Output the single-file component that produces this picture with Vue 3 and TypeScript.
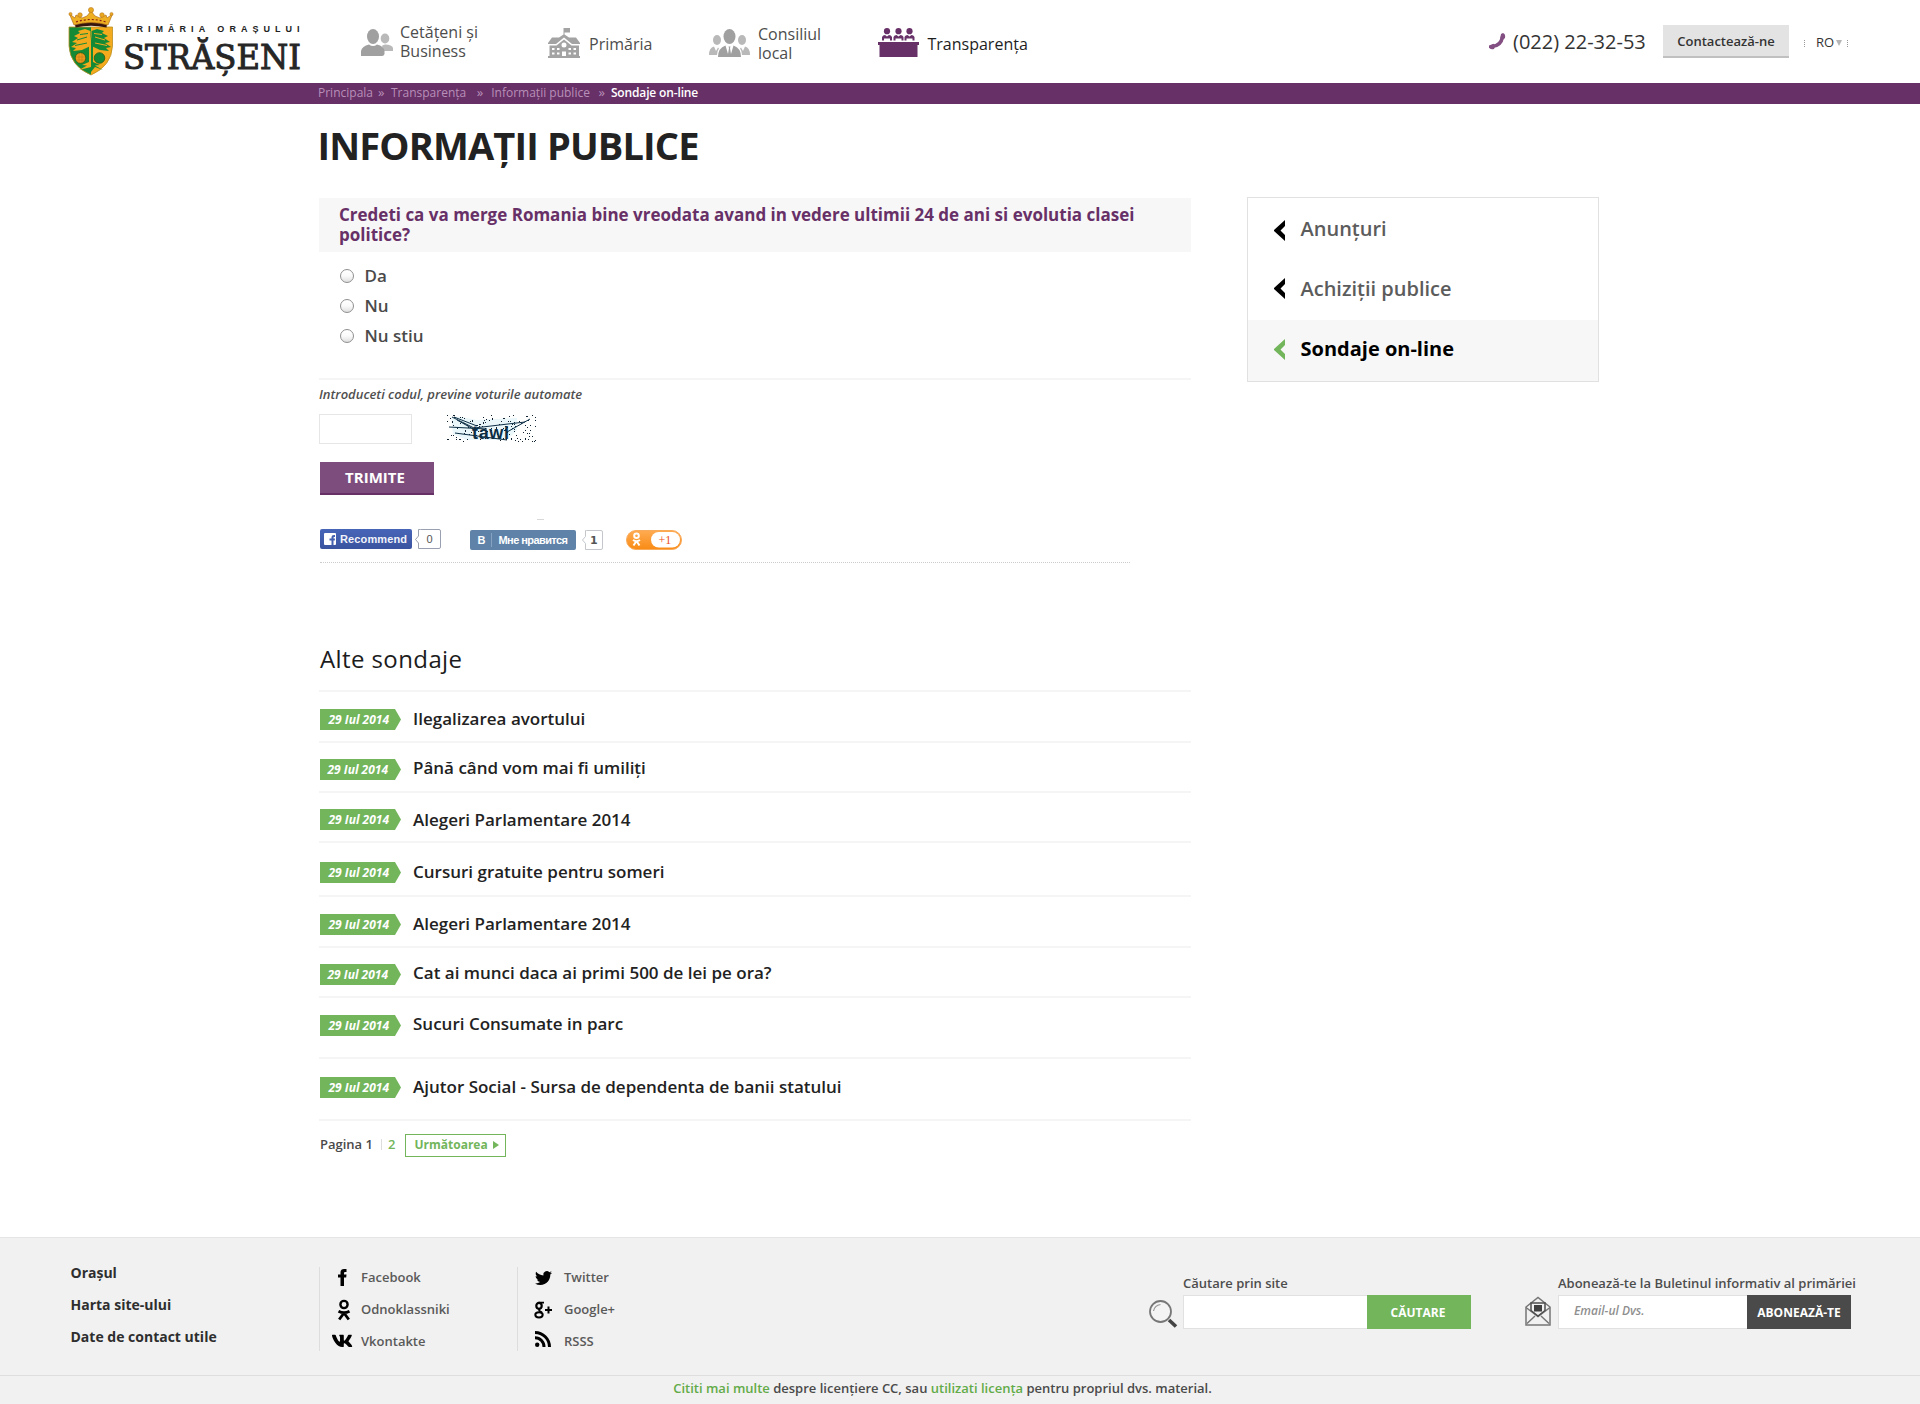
<script setup lang="ts">
interface Poll {
  date: string
  title: string
}

interface Dot {
  x: number
  y: number
}

const answers: string[] = ['Da', 'Nu', 'Nu stiu']

const sections = [
  { label: 'Anunțuri', active: false },
  { label: 'Achiziții publice', active: false },
  { label: 'Sondaje on-line', active: true },
]

const polls: Poll[] = [
  { date: '29 Iul 2014', title: 'Ilegalizarea avortului' },
  { date: '29 Iul 2014', title: 'Până când vom mai fi umiliți' },
  { date: '29 Iul 2014', title: 'Alegeri Parlamentare 2014' },
  { date: '29 Iul 2014', title: 'Cursuri gratuite pentru someri' },
  { date: '29 Iul 2014', title: 'Alegeri Parlamentare 2014' },
  { date: '29 Iul 2014', title: 'Cat ai munci daca ai primi 500 de lei pe ora?' },
  { date: '29 Iul 2014', title: 'Sucuri Consumate in parc' },
  { date: '29 Iul 2014', title: 'Ajutor Social - Sursa de dependenta de banii statului' },
]

// Speckles of the captcha, from a fixed seed so that they stay put.
function speckles(count: number): Dot[] {
  let seed = 7
  const next = () => {
    seed = (seed * 16807) % 2147483647
    return seed / 2147483647
  }
  return Array.from({ length: count }, () => ({ x: Math.floor(next() * 89), y: Math.floor(next() * 27) }))
}
const dots = speckles(140)
</script>

<template>
  <div class="page">
    <header class="top">
      <svg class="logo" width="240" height="83" viewBox="66 0 240 83">
        <path d="M69 27H91V75Q70 66 69 46Z" fill="#148a37" />
        <path d="M91 27H112.500V46Q111.500 66 91 75Z" fill="#f4aa1d" />
        <path d="M90.500 31L85 29L78 31L80 33L74 36L78 38L72 42L77 43L71 47L76 48L73 51L82 50L90.500 46Z" fill="#f4aa1d" />
        <path d="M77 40L87 37M75 45.500L87 43M80 34.500L88 33.500" stroke="#148a37" stroke-width="1" />
        <path d="M91.500 31L97 29L104 31L102 33L108 36L104 38L110 42L105 43L111 47L106 48L109 51L100 50L91.500 46Z" fill="#148a37" />
        <path d="M105 40L95 37M107 45.500L95 43M102 34.500L94 33.500" stroke="#f4aa1d" stroke-width="1" />
        <path d="M91 35V67L79 70L87 65.500L82 65L89 62V46Z" fill="#f4aa1d" />
        <path d="M91 35V72L95 67L103 70L95 65.500L100 65L93 62V46Z" fill="#148a37" />
        <circle cx="80.500" cy="58" r="5.300" fill="#f09a1b" stroke="#2c5a14" stroke-width=".8" />
        <path d="M76 57H85M76 60H85M79 53V63M82 53V63" stroke="#b4761a" stroke-width=".5" />
        <circle cx="99.500" cy="58" r="5.300" fill="#148a37" stroke="#2c5a14" stroke-width=".8" />
        <path d="M69 27H112.500V46Q111.500 66 91 75Q70 66 69 46Z" fill="none" stroke="#b98f22" stroke-width=".8" />
        <path d="M75 24Q91 19 107 24L106.500 27.500Q91 24 75.500 27.500Z" fill="#35150d" />
        <path d="M69.500 14L75 18L76 15L82 18L87 16L91 11L95 16L100 18L106 15L107 18L112.500 14L108 25Q91 20 74 25Z" fill="#eeaf22" stroke="#b3701a" stroke-width=".7" />
        <path d="M76 22Q91 17 106 22" fill="none" stroke="#8c2413" stroke-width="1.200" stroke-dasharray="2 2" />
        <g fill="#e9a820" stroke="#b3701a" stroke-width=".5">
          <circle cx="91" cy="10" r="2.600" /><circle cx="80" cy="15" r="2.300" /><circle cx="102" cy="15" r="2.300" />
          <circle cx="70.500" cy="14" r="1.600" /><circle cx="111.500" cy="14" r="1.600" />
        </g>
        <text x="125.500" y="31.500" class="logo-small" textLength="174">PRIMĂRIA ORAȘULUI</text>
        <text x="123" y="69" class="logo-big" textLength="178" lengthAdjust="spacingAndGlyphs">STRĂȘENI</text>
      </svg>

      <nav class="nav">
        <a class="nav-item citizens">
          <svg width="32" height="27" viewBox="0 0 32 27">
            <g fill="#b9b9b9">
              <ellipse cx="24" cy="9.500" rx="4.300" ry="5" />
              <path d="M23 22H32V19Q31 15.500 24 15.500Q21 16 21 17Z" />
            </g>
            <g fill="#a0a0a0">
              <ellipse cx="12" cy="7.500" rx="6" ry="7.500" />
              <path d="M0 27V22Q1 17 8 15.500Q12 18.500 16 15.500Q23 17 23.500 22V25Q23 27 21 27Z" />
            </g>
          </svg>
          <span>Cetățeni și<br>Business</span>
        </a>
        <a class="nav-item hall">
          <svg width="32" height="30" viewBox="0 0 32 30" fill="#a3a3a3">
            <path d="M15.500 0H22V4.500H16.500V6.500L21 9.500H28L32 15V16H24L16 9.500L8 16H0V15L4 9.500H11L15.500 6.500Z" />
            <path fill-rule="evenodd" d="M1.500 17.500H8.500L16 11.500L23.500 17.500H31V28H32V30H0V28H1.500ZM16 14.500A2.500 2.500 0 1 0 16 19.500A2.500 2.500 0 1 0 16 14.500ZM4 20V22H6.500V20ZM9 20V22H11.500V20ZM20.500 20V22H23V20ZM25.500 20V22H28V20ZM4 24.500V26.500H6.500V24.500ZM9 24.500V26.500H11.500V24.500ZM20.500 24.500V26.500H23V24.500ZM25.500 24.500V26.500H28V24.500ZM14 23.500V28H18V23.500Z" />
          </svg>
          <span>Primăria</span>
        </a>
        <a class="nav-item council">
          <svg width="41" height="28" viewBox="0 0 41 28">
            <g fill="#b9b9b9">
              <ellipse cx="8" cy="11" rx="4" ry="5" /><ellipse cx="33" cy="11" rx="4" ry="5" />
              <path d="M0 26Q0 18.500 5 17.500L7 22L9 18.500L10 19.500Q8 22 8 26Z" />
              <path d="M41 26Q41 18.500 36 17.500L34 22L32 18.500L31 19.500Q33 22 33 26Z" />
            </g>
            <g fill="#a0a0a0">
              <ellipse cx="20.500" cy="7.500" rx="6" ry="7.500" />
              <path d="M9 28Q9 19 16.500 16.500L19 25L20 19L19.500 17.500H21.500L21 19L22 25L24.500 16.500Q32 19 32 28Z" />
            </g>
          </svg>
          <span>Consiliul<br>local</span>
        </a>
        <a class="nav-item open active">
          <svg width="41" height="29" viewBox="0 0 41 29" fill="#673067">
            <g v-for="x in [9, 20.5, 31.5]" :key="x">
              <circle :cx="x" cy="3.2" r="3.1" />
              <path :d="`M${x - 5} 12.500V9Q${x - 4} 7 ${x - 2} 7L${x} 8.500L${x + 2} 7Q${x + 4} 7 ${x + 5} 9V12.500H${x + 3}V10.500H${x - 3}V12.500Z`" />
            </g>
            <path d="M0 14H41V17H39.500V29H1.500V17H0Z" />
          </svg>
          <span>Transparența</span>
        </a>
      </nav>

      <div class="phone">
        <svg width="17" height="17" viewBox="0 0 17 17">
          <path d="M3 13.500Q12 13 13.500 3.500" fill="none" stroke="#834f83" stroke-width="3.600" />
          <path d="M0 12.500L4.500 10.800L6.500 12.500L5 16Q1 17 0 14.500Z" fill="#834f83" />
          <path d="M12 1L14 0Q16.800 1 16 5L14 6.800L11.300 5Z" fill="#834f83" />
        </svg>
        <span>(022) 22-32-53</span>
      </div>
      <button class="contact">Contactează-ne</button>
      <div class="lang"><i></i><span>RO</span><b></b><i></i></div>
    </header>

    <div class="crumbs">
      <a>Principala</a><span class="sep s1">»</span><a>Transparența</a><span class="sep s2">»</span><a>Informații publice</a><span class="sep s3">»</span><strong>Sondaje on-line</strong>
    </div>

    <main class="main">
      <section class="content">
        <h1>INFORMAȚII PUBLICE</h1>
        <h2 class="question">Credeti ca va merge Romania bine vreodata avand in vedere ultimii 24 de ani si evolutia clasei<br>politice?</h2>
        <div class="answers">
          <label v-for="a in answers" :key="a" class="answer"><span class="dot"></span><span class="name">{{ a }}</span></label>
        </div>
        <p class="hint">Introduceti codul, previne voturile automate</p>
        <div class="captcha">
          <input type="text">
          <svg width="90" height="30" viewBox="0 0 90 30">
            <path d="M4 3H14L30 6L70 4V16L60 26H20L6 20Z" fill="#e9f6fa" />
            <rect v-for="(d, i) in dots" :key="i" :x="d.x" :y="d.y + 1" width="1" height="1" fill="#123" />
            <g fill="none" stroke="#0c2e45" stroke-width="1">
              <path d="M5 3L27 14M7 3L30 12M2 13L40 15M8 19L60 26M27 14L78 8M60 18L83 5M10 6L28 16" />
            </g>
            <text x="25" y="24.500" class="code" textLength="37">tawl</text>
          </svg>
        </div>
        <button class="send">TRIMITE</button>

        <div class="share">
          <span class="smudge"></span>
          <svg width="122" height="21" viewBox="0 0 122 21">
            <defs>
              <linearGradient id="fb" x1="0" y1="0" x2="0" y2="1"><stop offset="0" stop-color="#4765b8" /><stop offset="1" stop-color="#3a539f" /></linearGradient>
            </defs>
            <rect x="0" y="0" width="92" height="20" rx="2" fill="url(#fb)" />
            <rect x="4" y="4" width="12" height="12" rx="1" fill="#fff" />
            <path d="M11.500 16V11.500H9.500V9.500H11.500V8Q11.500 6 14 6H15V8H14.200Q13.500 8 13.500 8.800V9.500H15L14.800 11.500H13.500V16Z" fill="#4460b0" />
            <text x="20" y="14" class="fb-text" textLength="67">Recommend</text>
            <path d="M100.500.5H119Q120.500.5 120.500 2V18Q120.500 19.500 119 19.500H98.500V14L95.500 10.500L98.500 7V.5Z" fill="#fff" stroke="#9aa0b0" />
            <text x="106.500" y="14" class="fb-count">0</text>
          </svg>
          <svg class="vk" width="134" height="21" viewBox="0 0 134 21">
            <rect x="0" y="1" width="106" height="20" rx="2" fill="#5e82a8" />
            <text x="7.500" y="15" class="vk-text">В</text>
            <path d="M21.500 4V18" stroke="#86a2c0" />
            <text x="28.500" y="15" class="vk-text" textLength="69.500">Мне нравится</text>
            <path d="M116.500 1.500H131Q132.500 1.500 132.500 3V19Q132.500 20.500 131 20.500H115.500V14.500L112.500 11L115.500 7.500V1.500Z" fill="#fff" stroke="#c3c7cb" />
            <text x="120" y="15" class="vk-count">1</text>
          </svg>
          <svg class="ok" width="57" height="21" viewBox="0 0 57 21">
            <defs>
              <linearGradient id="okb" x1="0" y1="0" x2="0" y2="1"><stop offset="0" stop-color="#ffab52" /><stop offset="1" stop-color="#f98b14" /></linearGradient>
            </defs>
            <rect x=".5" y="1.500" width="55" height="19" rx="9.500" fill="url(#okb)" stroke="#f9ab5c" />
            <rect x="25" y="3" width="29" height="15.500" rx="7.700" fill="#fff" />
            <g fill="none" stroke="#fff" stroke-width="2">
              <circle cx="10.500" cy="6.800" r="2.300" />
              <path d="M7 11Q10.500 13.300 14 11M10.500 12L7.500 16.500M10.500 12L13.500 16.500" />
            </g>
            <text x="32.500" y="15" class="ok-text">+1</text>
          </svg>
        </div>

        <h3>Alte sondaje</h3>
        <div class="polls">
          <article v-for="(p, i) in polls" :key="i" class="poll">
            <time>{{ p.date }}</time>
            <a>{{ p.title }}</a>
          </article>
        </div>
        <div class="pager">
          <span>Pagina 1</span><i></i><a>2</a>
          <button><span>Următoarea</span><svg width="6" height="8" viewBox="0 0 6 8"><path d="M0 0L6 4L0 8Z" fill="#72b55b" /></svg></button>
        </div>
      </section>

      <aside class="side">
        <a v-for="s in sections" :key="s.label" :class="{ active: s.active }">
          <svg width="12" height="21" viewBox="0 0 12 21"><path d="M11 0V6L6.500 10.500L11 15V21L0 11V10Z" fill="currentColor" /></svg>
          <span>{{ s.label }}</span>
        </a>
      </aside>
    </main>

    <footer class="footer">
      <div class="foot-main">
        <div class="links"><a>Orașul</a><a>Harta site-ului</a><a>Date de contact utile</a></div>
        <div class="social first">
          <a><svg width="41" height="32" viewBox="0 0 41 32"><path d="M20.500 25V16.500H18V13.500H20.500V11.500Q20.500 8 24 8H26.500V11H25Q24 11 24 12.200V13.500H26.500L26.200 16.500H24V25Z" /></svg><span>Facebook</span></a>
          <a><svg width="41" height="32" viewBox="0 0 41 32"><g fill="none" stroke="#000" stroke-width="2.400"><circle cx="24" cy="11.500" r="3.600" /><path d="M18.500 18.200Q24 21.200 29.500 18.200M24 20L19.200 26.500M24 20L28.800 26.500" stroke-width="2.800" /></g></svg><span>Odnoklassniki</span></a>
          <a><svg width="41" height="32" viewBox="0 0 41 32"><path transform="translate(11.300 6.200) scale(.0375 .038)" d="M545 117.700c3.700-12.500 0-21.700-17.800-21.700h-58.900c-15 0-21.900 7.900-25.600 16.700 0 0-30 73.100-72.400 120.500-13.700 13.700-20 18.100-27.500 18.100-3.700 0-9.400-4.400-9.400-16.900V117.700c0-15-4.200-21.700-16.600-21.700h-92.600c-9.400 0-15 7-15 13.500 0 14.200 21.200 17.500 23.400 57.500v86.800c0 19-3.400 22.500-10.900 22.500-20 0-68.600-73.400-97.400-157.400-5.800-16.300-11.500-22.900-26.600-22.900H38.800c-16.800 0-20.200 7.900-20.200 16.700 0 15.600 20 93.100 93.100 195.500C160.400 378.100 229 416 291.400 416c37.500 0 42.100-8.400 42.100-22.900 0-66.800-3.400-73.100 15.400-73.100 8.700 0 23.700 4.400 58.700 38.100 40 40 46.600 57.900 69 57.900h58.900c16.800 0 25.300-8.400 20.400-25-11.200-34.900-86.900-106.700-90.300-111.500-8.700-11.200-6.200-16.200 0-26.200.1-.1 72-101.300 79.400-135.600z" /></svg><span>Vkontakte</span></a>
        </div>
        <div class="social second">
          <a><svg width="46" height="32" viewBox="0 0 46 32"><path transform="translate(17 8.500) scale(.71)" d="M23.953 4.570a10 10 0 01-2.825.775 4.958 4.958 0 002.163-2.723c-.951.555-2.005.959-3.127 1.184a4.920 4.920 0 00-8.384 4.482C7.690 8.095 4.067 6.130 1.640 3.162a4.822 4.822 0 00-.666 2.475c0 1.710.870 3.213 2.188 4.096a4.904 4.904 0 01-2.228-.616v.060a4.923 4.923 0 003.946 4.827 4.996 4.996 0 01-2.212.085 4.936 4.936 0 004.604 3.417 9.867 9.867 0 01-6.102 2.105c-.390 0-.779-.023-1.170-.067a13.995 13.995 0 007.557 2.209c9.053 0 13.998-7.496 13.998-13.985 0-.210 0-.420-.015-.630A9.935 9.935 0 0024 4.590z" /></svg><span>Twitter</span></a>
          <a><svg width="46" height="32" viewBox="0 0 46 32"><g fill="none" stroke="#000"><ellipse cx="21" cy="12.800" rx="2.700" ry="3" stroke-width="2.200" /><ellipse cx="21" cy="21.800" rx="3.700" ry="2.600" stroke-width="2" /><path d="M20.500 9.600H26M22 15.500Q20 17 22 18.200L24 19.500" stroke-width="1.700" /><path d="M30.500 13.500V20.500M27 17H34" stroke-width="2" /></g></svg><span>Google+</span></a>
          <a><svg width="46" height="32" viewBox="0 0 46 32"><circle cx="19.200" cy="19.800" r="2.200" /><path d="M17 12.700A9 9 0 0 1 26 22M17 7.500A14.500 14.500 0 0 1 31.500 22" fill="none" stroke="#000" stroke-width="3" /></svg><span>RSSS</span></a>
        </div>

        <svg class="glass" width="28" height="28" viewBox="0 0 28 28">
          <path d="M20 20L27 26.500" stroke="#444" stroke-width="3.600" />
          <circle cx="11.500" cy="11.500" r="10.500" fill="#f4f4f4" stroke="#777" stroke-width="1.800" />
          <path d="M4.500 11Q5.500 5.500 11.500 4.500" fill="none" stroke="#999" stroke-width="1.200" />
        </svg>
        <form class="field search">
          <label>Căutare prin site</label>
          <div><input type="text"><button type="button">CĂUTARE</button></div>
        </form>
        <svg class="mail" width="26" height="30" viewBox="0 0 26 30" fill="none" stroke="#757575" stroke-width="1.500">
          <path d="M1 11L13 1.500L25 11V29H1Z" />
          <path d="M1 11.500L13 20.500L25 11.500M2 27.500L10 20M24 27.500L16 20" />
          <path d="M6 14.500V7H20V14.500L13 20Z" fill="#f1f1f1" stroke="#4d4d4d" />
          <rect x="9" y="9" width="8" height="6.500" fill="#3f3f3f" stroke="none" />
        </svg>
        <form class="field news">
          <label>Abonează-te la Buletinul informativ al primăriei</label>
          <div><input type="text" placeholder="Email-ul Dvs."><button type="button">ABONEAZĂ-TE</button></div>
        </form>
      </div>
      <p class="license"><a>Cititi mai multe</a> despre licențiere CC, sau <a>utilizati licența</a> pentru propriul dvs. material.</p>
    </footer>
  </div>
</template>

<style>
body {
  margin: 0;
  background: #fff;
}
</style>

<style scoped>
.page {
  width: 1920px;
  height: 1404px;
  overflow: hidden;
  font-family: "Open Sans", sans-serif;
  color: #222;
}
button {
  border: 0;
  padding: 0;
  font-family: inherit;
}
svg {
  display: block;
  flex: none;
  overflow: visible;
}

.top {
  display: flex;
  align-items: flex-start;
  height: 83px;
}
.logo { margin-left: 66px; }
.logo-small {
  font: 700 9px "Liberation Sans", sans-serif;
  fill: #222;
}
.logo-big {
  font: 34px "DejaVu Serif", serif;
  fill: #262626;
  stroke: #262626;
  stroke-width: 1;
}
.nav {
  display: flex;
  margin-left: 55px;
}
.nav-item {
  display: flex;
  align-items: flex-start;
  font-size: 16px;
  line-height: 19px;
  color: #4d4d4d;
}
.citizens { width: 187px; gap: 7px; }
.citizens svg { margin-top: 29px; }
.citizens span { margin-top: 23px; }
.hall { width: 161px; gap: 9px; }
.hall svg { margin-top: 28px; }
.hall span { margin-top: 35px; }
.council { width: 169px; gap: 8px; }
.council svg { margin-top: 29px; }
.council span { margin-top: 25px; }
.open { width: 611px; gap: 8.500px; }
.open svg { margin-top: 28px; }
.open span { margin-top: 35px; }
.nav-item.active { color: #1e1e1e; }
.phone {
  display: flex;
  gap: 7px;
  width: 174px;
  font-size: 20px;
  line-height: 24px;
  color: #333;
  white-space: nowrap;
}
.phone svg { margin-top: 33px; }
.phone span { margin-top: 30px; }
.contact {
  width: 126px;
  height: 33px;
  margin-top: 25px;
  border-bottom: 2px solid #c0c0c0;
  background: #e3e3e3;
  font-size: 13px;
  font-weight: 600;
  color: #333;
}
.lang {
  display: flex;
  margin: 40px 0 0 15px;
  font-size: 13px;
  line-height: 16px;
  color: #333;
}
.lang i {
  height: 7px;
  border-left: 1px dotted #999;
}
.lang span { margin: -6px 2px 0 11px; }
.lang b {
  margin-right: 5px;
  height: 0;
  border: 3.500px solid transparent;
  border-top: 6px solid #b5b5b5;
  border-bottom: 0;
}

.crumbs {
  display: flex;
  height: 21px;
  padding-left: 318px;
  background: #673067;
  font-size: 12px;
  line-height: 19px;
  color: #b88fb8;
}
.crumbs strong {
  font-weight: 600;
  letter-spacing: -.15px;
  color: #fff;
}
.sep {
  box-sizing: border-box;
  font-size: 13px;
}
.s1 { width: 18px; padding-left: 5px; }
.s2 { width: 25px; padding-left: 10.500px; }
.s3 { width: 21px; padding-left: 8.500px; }

.main {
  display: flex;
  align-items: flex-start;
  height: 1133px;
}
.content {
  width: 872px;
  margin-left: 319px;
  padding-top: 21px;
}
h1 {
  margin: 0 0 33px -1.500px;
  font-size: 38px;
  font-weight: 700;
  line-height: 40px;
  letter-spacing: -.85px;
  color: #222;
}
.question {
  box-sizing: border-box;
  height: 54px;
  margin: 0;
  padding: 7px 0 0 20px;
  background: #f7f7f7;
  font-size: 17px;
  font-weight: 700;
  line-height: 20px;
  color: #673067;
}
.answers {
  padding: 9px 0 27px 21px;
  border-bottom: 2px solid #f5f5f5;
}
.answer {
  display: flex;
  align-items: center;
  gap: 10.500px;
  height: 30px;
  font-size: 17px;
  font-weight: 600;
  color: #4a4a4a;
}
.name { margin-bottom: 1px; }
.dot {
  box-sizing: border-box;
  width: 14px;
  height: 14px;
  border: 1px solid #8f8f8f;
  border-radius: 50%;
  background: linear-gradient(#fff, #fafafa 50%, #dedede);
}
.hint {
  margin: 4px 0 10px;
  font-size: 13px;
  font-style: italic;
  font-weight: 600;
  line-height: 20px;
  color: #505050;
}
.captcha {
  display: flex;
  gap: 35px;
}
.captcha input {
  box-sizing: border-box;
  width: 93px;
  height: 30px;
  border: 1px solid #e6e6e6;
  background: #fff;
}
.code {
  font: 700 18px "Liberation Sans", sans-serif;
  fill: #0c2e45;
}
.send {
  display: block;
  width: 114px;
  height: 33px;
  margin: 18px 0 0 1px;
  padding: 0 4px 1px 0;
  border-bottom: 2px solid #673067;
  background: #7d4d7d;
  font-size: 15px;
  font-weight: 700;
  color: #fff;
}
.share {
  position: relative;
  display: flex;
  width: 810px;
  height: 33px;
  margin: 34px 0 0 1px;
  border-bottom: 1px dotted #ccc;
}
.smudge {
  position: absolute;
  left: 217px;
  top: -10px;
  width: 7px;
  height: 1px;
  background: #d8d8d8;
}
.vk { margin-left: 28px; }
.ok { margin-left: 22px; }
.fb-text { font: 700 11px "Liberation Sans", sans-serif; fill: #f1f3fa; }
.fb-count { font: 11px "Liberation Sans", sans-serif; fill: #555; }
.vk-text { font: 700 11px "Liberation Sans", sans-serif; fill: #fff; }
.vk-count { font: 700 11px "DejaVu Sans", sans-serif; fill: #555; }
.ok-text { font: 12px "Liberation Serif", serif; fill: #ee4d1b; }

h3 {
  margin: 80px 0 15px 1px;
  font-size: 24px;
  font-weight: 400;
  line-height: 32px;
  letter-spacing: .4px;
  color: #1c1c1c;
}
.polls { border-bottom: 2px solid #f5f5f5; }
.poll {
  box-sizing: border-box;
  display: flex;
  align-items: flex-start;
  height: 50px;
  padding: 15px 0 0 1px;
  border-top: 2px solid #f5f5f5;
}
.poll time {
  width: 81px;
  height: 21px;
  margin: 1px 12px 0 0;
  background: #72b55b;
  clip-path: polygon(0 0, 75px 0, 81px 50%, 75px 100%, 0 100%);
  font-size: 12px;
  font-style: italic;
  font-weight: 700;
  line-height: 21px;
  text-indent: 8.500px;
  color: #fff;
}
.poll a {
  font-size: 17px;
  font-weight: 600;
  line-height: 20px;
}
.poll:nth-child(1), .poll:nth-child(5) { height: 51px; padding-top: 17px; }
.poll:nth-child(1) time, .poll:nth-child(5) time { margin-top: 0; }
.poll:nth-child(2) time, .poll:nth-child(6) time { text-indent: 7.500px; }
.poll:nth-child(3) { padding-top: 17px; }
.poll:nth-child(3) time { margin-top: -1px; }
.poll:nth-child(4) { height: 54px; padding-top: 19px; }
.poll:nth-child(4) time { margin-top: 0; }
.poll:nth-child(7) { height: 61px; padding-top: 16px; }
.poll:nth-child(8) { height: 62px; padding-top: 18px; }
.poll:nth-child(8) time { margin-top: 0; }

.pager {
  display: flex;
  height: 23px;
  margin: 13px 0 0 1px;
  font-size: 13px;
  font-weight: 600;
  line-height: 21px;
  color: #4a4a4a;
}
.pager i {
  width: 1px;
  height: 11px;
  margin: 5px 6px 0 8px;
  background: #ddd;
}
.pager a {
  width: 17px;
  color: #72b55b;
}
.pager button {
  box-sizing: border-box;
  display: flex;
  align-items: center;
  gap: 5px;
  width: 101px;
  height: 23px;
  padding: 0 0 2px 8.500px;
  border: 1px solid #72b55b;
  background: #fff;
  font-size: 12px;
  font-weight: 700;
  color: #72b55b;
}

.side {
  box-sizing: border-box;
  width: 352px;
  height: 185px;
  margin: 93px 0 0 56px;
  border: 1px solid #e1e1e1;
}
.side a {
  display: flex;
  gap: 14.500px;
  height: 61px;
  padding-left: 26px;
  font-size: 20px;
  font-weight: 600;
  line-height: 59px;
  color: #000;
}
.side span { color: #5c5c5c; }
.side svg { margin-top: 19px; }
.side a:first-child { line-height: 61px; }
.side a:first-child svg { margin-top: 22px; }
.side a.active {
  background: #f7f7f7;
  font-weight: 700;
  line-height: 57px;
  color: #72b55b;
}
.side .active span { color: #000; }

.footer {
  background: #f1f1f1;
}
.foot-main {
  box-sizing: border-box;
  display: flex;
  align-items: flex-start;
  height: 138px;
  border-top: 1px solid #e5e5e5;
}
.links {
  display: flex;
  flex-direction: column;
  width: 248.500px;
  margin: 19px 0 0 70.500px;
  font-size: 14px;
  font-weight: 700;
  line-height: 32px;
  color: #2e2e2e;
}
.social {
  box-sizing: border-box;
  height: 84px;
  margin-top: 29px;
  border-left: 1px solid #ddd;
  font-size: 13px;
  font-weight: 600;
  line-height: 32px;
  color: #5a5a5a;
}
.social a {
  position: relative;
  top: -6px;
  display: flex;
  height: 32px;
}
.social svg { fill: #000; }
.first { width: 198px; }
.second { width: 632px; }
.glass { margin: 62px 6px 0 0; }
.mail { margin: 58px 7px 0 54px; }
.field {
  margin-top: 35px;
  font-size: 13px;
  font-weight: 600;
  color: #4d4d4d;
  white-space: nowrap;
}
.field label {
  display: block;
  height: 22px;
  line-height: 20px;
}
.field div { display: flex; }
.field input {
  box-sizing: border-box;
  width: 184px;
  height: 34px;
  padding: 0 0 3px 15px;
  border: 1px solid #e1e1e1;
  border-right: 0;
  background: #fff;
  font: italic 600 12px "Open Sans", sans-serif;
}
.field input::placeholder { color: #8f8f8f; }
.field button {
  width: 104px;
  height: 34px;
  background: #72b55b;
  font-size: 12px;
  font-weight: 700;
  color: #fff;
}
.search button { padding-right: 2px; }
.news { width: 293px; }
.news input { width: 189px; }
.news button { background: #4a4a4a; padding-top: 1px; }
.license {
  height: 28px;
  margin: 0;
  padding-right: 35px;
  border-top: 1px solid #dedede;
  font-size: 13px;
  font-weight: 600;
  line-height: 24px;
  text-align: center;
  color: #4a4a4a;
}
.license a { color: #62ab48; }
</style>
